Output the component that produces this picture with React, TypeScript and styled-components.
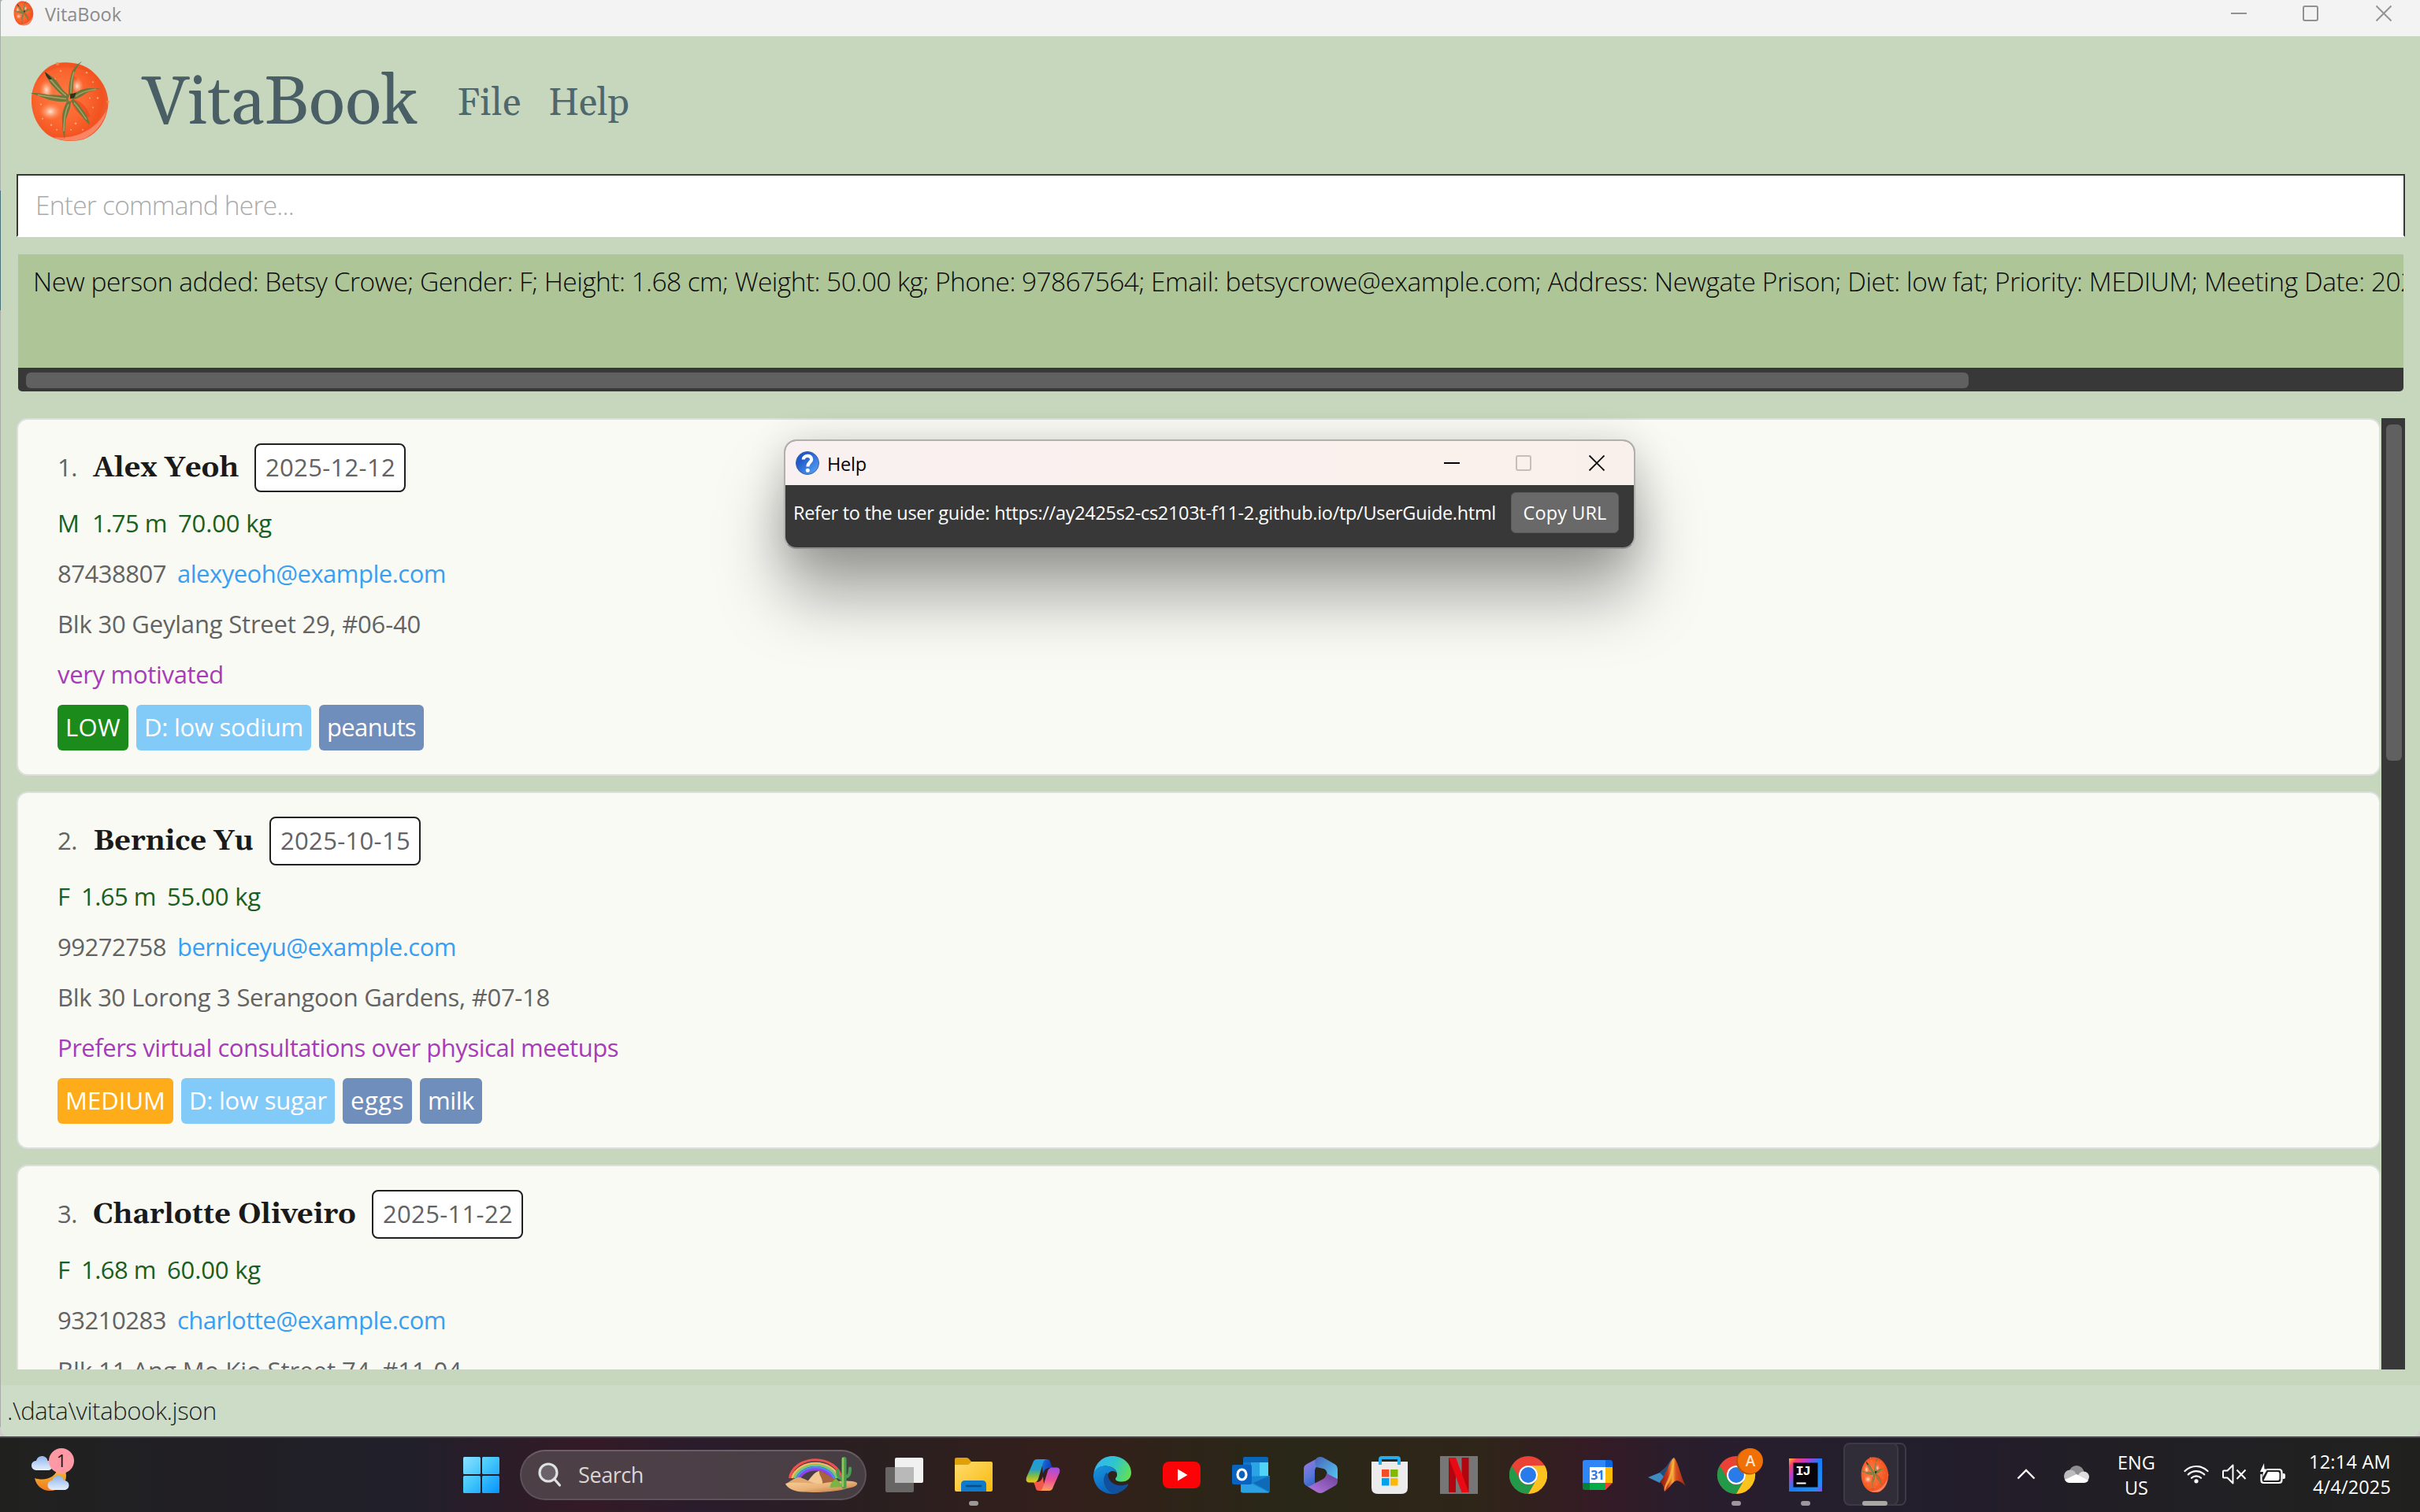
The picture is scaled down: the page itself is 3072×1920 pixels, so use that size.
import React, { useLayoutEffect, useRef, useState } from "react";
import styled, { createGlobalStyle } from "styled-components";

const GlobalStyle = createGlobalStyle`
  *, *::before, *::after { box-sizing: border-box; }
  html, body { margin: 0; padding: 0; background: #20211f; }
  body { font-family: "Open Sans", "Noto Sans", sans-serif; overflow: hidden; }
  svg { display: block; flex: none; }
`;

/* ---------- text that tracks itself to a given advance width ---------- */

const Tracked = styled.span`
  display: inline-block;
  white-space: pre;
`;

function Fit({ w, children }: { w: number; children: string }) {
  const ref = useRef<HTMLSpanElement>(null);
  const [spacing, setSpacing] = useState(0);
  useLayoutEffect(() => {
    const natural = ref.current!.getBoundingClientRect().width;
    setSpacing((w - natural) / children.length);
  }, [w, children]);
  return (
    <Tracked ref={ref} style={{ letterSpacing: spacing }}>
      {children}
    </Tracked>
  );
}

/* ---------- desktop and main window ---------- */

const Desktop = styled.div`
  position: relative;
  display: flex;
  flex-direction: column;
  width: 3072px;
  height: 1920px;
  overflow: hidden;
`;

const Edge = styled.div`
  display: flex;
  height: 1824px;
  padding-left: 1px;
  background: linear-gradient(#a9b0ab 0 242px, #46727a 242px 394px, #a9a9a9 394px 1812px, #cfcccb 1812px);
`;

const AppWindow = styled.div`
  display: flex;
  flex-direction: column;
  flex: 1;
  min-width: 0;
  background: #c7d7bd;
  border-radius: 4px 0 9px 9px;
  overflow: hidden;
`;

const TitleBar = styled.div`
  display: flex;
  align-items: flex-start;
  height: 46px;
  padding: 1px 35px 0 16px;
  background: #f3f3f3;
`;

const TitleText = styled.div`
  margin: 0 auto 0 14px;
  font-size: 23.5px;
  line-height: 34px;
  color: #8b8b8b;
`;

const Controls = styled.div<{ $gap: number }>`
  display: flex;
  align-items: center;
  gap: ${(p) => p.$gap}px;
`;

const MainControls = styled(Controls)`
  height: 32px;
`;

const Header = styled.header`
  display: flex;
  align-items: center;
  height: 165px;
  margin-bottom: 10px;
  padding: 1px 0 0 37px;
  font-family: Gelasio, Georgia, "Liberation Serif", serif;
`;

const Brand = styled.div`
  margin: 5px 0 0 41px;
  font-size: 86px;
  line-height: 110px;
  color: #4a5e65;
`;

const Menu = styled.nav`
  display: flex;
  gap: 34px;
  margin: 5px 0 0 50px;
  font-size: 48px;
  line-height: 60px;
  color: #4f686c;
`;

const CommandBox = styled.div`
  display: flex;
  align-items: center;
  height: 80px;
  margin: 0 19px 0 20px;
  padding: 0 0 2px 22px;
  border: 2px solid #353a39;
  border-bottom-color: #fff;
  background: #fff;
  font-weight: 300;
  font-size: 33.5px;
  color: #a9abab;
`;

const ResultBox = styled.div`
  display: flex;
  flex-direction: column;
  height: 174px;
  margin: 22px 21px 0 22px;
  background: #aec598;
  border-radius: 0 0 5px 5px;
  overflow: hidden;
`;

const ResultText = styled.div`
  flex: 1;
  padding: 10px 0 0 19px;
  font-weight: 300;
  font-size: 33.5px;
  line-height: 48px;
  color: #0b0b0b;
  white-space: pre;
`;

const HScroll = styled.div`
  height: 30px;
  padding: 6px 10px 4px;
  background: #383838;
`;

const HThumb = styled.div`
  width: 2466px;
  height: 20px;
  border-radius: 6px;
  background: #606060;
`;

const ListArea = styled.div`
  display: flex;
  height: 1208px;
  margin: 34px 19px 0 20px;
  overflow: hidden;
`;

const CardList = styled.div`
  display: flex;
  flex-direction: column;
  gap: 20px;
  flex: 1;
  margin-right: 1px;
`;

const VScroll = styled.div`
  width: 30px;
  padding: 8px 4px 0 6px;
  background: #383838;
`;

const VThumb = styled.div`
  width: 20px;
  height: 427px;
  border-radius: 6px;
  background: #606060;
`;

const StatusBar = styled.footer`
  display: flex;
  align-items: center;
  height: 65px;
  margin-top: 20px;
  padding: 0 0 1px 8px;
  background: #cddcc7;
  font-weight: 300;
  font-size: 31px;
  color: #1d1f1d;
`;

/* ---------- person cards ---------- */

const Card = styled.article`
  flex: none;
  height: 454px;
  padding: 30px 50px;
  border: 2px solid #dddfdf;
  border-radius: 14px;
  background: #f9faf4;
  font-size: 31px;
  color: #636363;
`;

const CardHead = styled.div`
  display: flex;
  height: 62px;
  line-height: 60px;
  margin-bottom: 6.5px;
`;

const Index = styled.span`
  width: 45px;
`;

const Name = styled.span`
  font-family: Gelasio, Georgia, "Liberation Serif", serif;
  font-weight: 700;
  font-size: 36px;
  line-height: 63px;
  color: #1a1a1a;
`;

const DateBox = styled.span`
  width: 192px;
  margin-left: 20px;
  padding-left: 12px;
  line-height: 57px;
  border: 2px solid #202020;
  border-radius: 8px;
  background: #fff;
`;

const Line = styled.div<{ $color?: string; $gap?: number }>`
  display: flex;
  gap: ${(p) => p.$gap ?? 14}px;
  height: 64px;
  line-height: 64px;
  color: ${(p) => p.$color ?? "#636363"};
`;

const Tags = styled.div`
  display: flex;
  gap: 10px;
  margin-top: 7.5px;
`;

const Tag = styled.span<{ $bg: string }>`
  height: 58px;
  padding: 0 10px;
  line-height: 57px;
  border-radius: 6px;
  background: ${(p) => p.$bg};
  color: #fff;
`;

/* ---------- help dialog ---------- */

const Dialog = styled.div`
  position: absolute;
  left: 995px;
  top: 558px;
  width: 1081px;
  height: 139px;
  border: 2px solid #b1b0ae;
  border-bottom-color: #8d8d8b;
  border-radius: 16px;
  background: #383838;
  box-shadow: 0 60px 84px rgba(0, 0, 0, 0.34), 0 6px 50px rgba(0, 0, 0, 0.16);
  overflow: hidden;
`;

const DialogTitle = styled.div`
  display: flex;
  align-items: center;
  height: 56px;
  padding: 0 36px 0 13px;
  background: linear-gradient(90deg, #f9f0f1, #faf0ec 80%, #faf0eb);
  font-size: 23.5px;
  color: #000;
`;

const DialogLabel = styled.span`
  margin: 1px auto 0 10px;
`;

const DialogBody = styled.div`
  display: flex;
  align-items: flex-start;
  gap: 19px;
  padding: 9px 0 0 10px;
  font-size: 23.5px;
  line-height: 53px;
  color: #fff;
`;

const CopyButton = styled.button`
  width: 137px;
  height: 52px;
  padding: 0;
  border: 1px solid #5a5a5a;
  border-radius: 6px;
  background: #696969;
  font: 23.5px "Open Sans", sans-serif;
  color: #fff;
`;

/* ---------- taskbar ---------- */

const Taskbar = styled.div`
  display: flex;
  align-items: center;
  height: 96px;
  border-top: 2px solid #48464a;
  padding-right: 37px;
  background: linear-gradient(90deg, #20211f 0, #211f24 240px, #211f2a 520px, #341a26 750px, #2a1c2c 885px,
    #2a1f20 1110px, #341f1c 1350px, #2e2418 1500px, #292718 1640px, #2f2519 1880px, #351b25 2020px, #2a1d2c 2130px,
    #221f2c 2400px, #231d2b 2500px, #211f25 2680px, #20211f 3072px);
`;

const WeatherSlot = styled.div`
  width: 567px;
  padding: 0 0 12px 38px;
`;

const Cell = styled.div`
  position: relative;
  display: flex;
  align-items: center;
  justify-content: center;
  width: 88px;
  height: 92px;
`;

const Indicator = styled.i<{ $wide?: boolean }>`
  position: absolute;
  bottom: 7px;
  left: ${(p) => (p.$wide ? 28 : 38)}px;
  width: ${(p) => (p.$wide ? 32 : 12)}px;
  height: 6px;
  border-radius: 3px;
  background: ${(p) => (p.$wide ? "#a9a7a3" : "#9b979b")};
`;

const ActiveTile = styled.div`
  position: absolute;
  left: 4px;
  top: 5px;
  width: 70px;
  height: 80px;
  border: 2px solid #3d3a45;
  border-radius: 8px;
  background: #312d38;
`;

const BackTile = styled(ActiveTile)`
  left: 14px;
  background: #26232e;
`;

const Layer = styled.div`
  position: relative;
`;

const SearchPill = styled.div`
  display: flex;
  align-items: center;
  width: 440px;
  height: 64px;
  margin: 0 4px 0 5px;
  padding: 0 9px 0 21px;
  border: 2px solid #5d5259;
  border-top-color: #6b5f66;
  border-radius: 32px;
  background: linear-gradient(90deg, #4c3f45, #4d3f47 40%, #463e43);
  font-size: 27px;
  color: #dad6d8;
`;

const SearchLabel = styled.span`
  margin: -1px auto 0 21px;
`;

const Tray = styled.div`
  display: flex;
  align-items: center;
  margin-left: auto;
  height: 94px;
  font-size: 23.5px;
  line-height: 32px;
  color: #fff;
`;

const Lang = styled.div`
  width: 50px;
  margin: 0 35px;
  text-align: center;
`;

const Clock = styled.div`
  width: 106px;
  margin: -2px 0 0 28px;
  text-align: right;
`;

const TrayIcons = styled.div<{ $gap: number }>`
  display: flex;
  align-items: center;
  gap: ${(p) => p.$gap}px;
  padding-bottom: 2px;
`;

/* ---------- drawings ---------- */

function Tomato({ w, h, id }: { w: number; h: number; id: string }) {
  return (
    <svg width={w} height={h} viewBox="8 8 102 102" preserveAspectRatio="none">
      <defs>
        <radialGradient id={id} cx="0.4" cy="0.45" r="0.62">
          <stop offset="0" stopColor="#ff7a42" />
          <stop offset="0.5" stopColor="#fb6730" />
          <stop offset="0.85" stopColor="#f2521f" />
          <stop offset="1" stopColor="#e86238" />
        </radialGradient>
        <radialGradient id={id + "g"}>
          <stop offset="0" stopColor="#ffe6d6" />
          <stop offset="1" stopColor="#ff9a66" stopOpacity="0" />
        </radialGradient>
      </defs>
      <path
        d="M44 10C58 8 76 10 89 22C103 35 109 50 107 66C104 86 92 100 76 106C60 110 40 108 28 98C15 87 9 70 10 54C11 36 22 16 44 10Z"
        fill={`url(#${id})`}
      />
      <path d="M44 10C60 9 76 12 88 23C80 20 62 13 44 16C32 18 22 26 17 34C21 21 32 12 44 10Z" fill="#ee4c22" opacity="0.45" />
      <path d="M106 68C102 86 90 99 77 105C62 109 48 108 38 103C62 107 92 96 106 68Z" fill="#ff9478" opacity="0.75" />
      <path d="M60 56C68 54 82 64 84 78C72 78 62 68 60 56Z" fill="#e23a14" opacity="0.45" />
      <path d="M63 26C70 28 73 42 67 48L62 46Z" fill="#e03e18" opacity="0.4" />
      <ellipse cx="29" cy="44" rx="9" ry="13" fill={`url(#${id}g)`} />
      <ellipse cx="34" cy="71" rx="14" ry="11" fill={`url(#${id}g)`} />
      <ellipse cx="68" cy="39" rx="8" ry="11" fill={`url(#${id}g)`} />
      <g fill="#ffb98a" opacity="0.8">
        <circle cx="35" cy="88" r="1.2" /><circle cx="42" cy="94" r="1" /><circle cx="24" cy="80" r="1" />
        <circle cx="66" cy="86" r="1.3" /><circle cx="76" cy="78" r="1" /><circle cx="80" cy="22" r="1.2" />
        <circle cx="88" cy="34" r="1" /><circle cx="94" cy="54" r="1.2" /><circle cx="47" cy="20" r="1.2" />
        <circle cx="40" cy="30" r="1" /><circle cx="75" cy="94" r="1" /><circle cx="22" cy="62" r="1.1" />
        <circle cx="60" cy="94" r="1" /><circle cx="88" cy="66" r="1" /><circle cx="84" cy="54" r="1" />
        <circle cx="43" cy="11" r="2.2" fill="#f78c3c" /><circle cx="107" cy="59" r="1.8" fill="#f78c3c" />
      </g>
      <g fill="#6f773a">
        <path d="M57 54C50 53 43 46 38 40C32 34 29 27 27 21C33 25 40 29 43 34C48 41 51 47 58 50Z" />
        <path d="M57 50C57 38 59 28 62 20C65 14 70 10 74 8C68 14 64 21 63 30C63 40 62 46 62 51Z" />
        <path d="M62 52C66 46 73 43 80 42C86 41 92 42 98 42C91 44 84 45 79 48C74 52 68 55 62 56Z" />
        <path d="M56 52C48 50 40 50 32 50C24 49 15 47 9 48C18 50 26 55 36 57C44 59 50 59 57 58Z" />
        <path d="M55 58C51 66 48 74 49 84C49 92 50 100 52 106C53 98 52 88 54 80C57 72 60 66 60 58Z" />
        <path d="M60 58C66 65 69 72 74 77C77 81 81 85 84 88C83 80 79 74 75 69C71 63 68 58 62 55Z" />
      </g>
      <g fill="none" stroke="#b0ae72" strokeWidth="1.5" opacity="0.85">
        <path d="M31 28C38 34 44 44 54 51" /><path d="M60 48C60 38 61 28 64 21" /><path d="M66 52C74 46 84 44 92 43" />
        <path d="M18 50C30 52 42 54 54 55" /><path d="M57 62C52 72 51 84 51 96" /><path d="M64 60C70 66 74 73 80 81" />
      </g>
      <path d="M59 49L67 47L64 54L59 55Z" fill="#30351a" />
      <path d="M27 21C31 24 34 27 36 30L33 31C29 28 28 25 27 21Z" fill="#34341c" />
    </svg>
  );
}

const WinControl = ({ kind, color }: { kind: "min" | "max" | "close"; color: string }) => (
  <svg width="22" height="22" viewBox="0 0 22 22" fill="none" stroke={color} strokeWidth="2">
    {kind === "min" && <path d="M1 11H21" />}
    {kind === "max" && <rect x="1" y="2" width="18" height="18" rx="2" />}
    {kind === "close" && <path d="M1.5 1.5L20.5 20.5M20.5 1.5L1.5 20.5" strokeWidth="1.8" />}
  </svg>
);

const HelpIcon = () => (
  <svg width="30" height="30" viewBox="0 0 30 30">
    <defs>
      <linearGradient id="helpBall" x1="0" y1="0" x2="1" y2="1">
        <stop offset="0.3" stopColor="#2259cb" />
        <stop offset="1" stopColor="#5cadf5" />
      </linearGradient>
    </defs>
    <circle cx="15" cy="15" r="14.5" fill="url(#helpBall)" stroke="#3b62a8" />
    <path d="M9.800 10.500C10 4.600 20.200 4.400 20.200 10.200C20.200 14.200 15.400 14 15.400 19.500" fill="none" stroke="#fff" strokeWidth="4.200" />
    <circle cx="15.300" cy="24.200" r="2.500" fill="#fff" />
  </svg>
);

const CLOUD = "M7 18C2.5 18 0 15.5 0 12C0 8.5 2.5 6 6 6C7 2 10 0 13.5 0C17 0 20 2.5 20.5 6C24.5 6 27 8.5 27 12C27 15.5 24.5 18 21 18Z";

const Weather = () => (
  <svg width="60" height="60" viewBox="38 1836 60 60">
    <defs>
      <linearGradient id="cloud" x1="0" y1="0" x2="0" y2="1">
        <stop offset="0" stopColor="#8fb4ee" />
        <stop offset="1" stopColor="#e6effc" />
      </linearGradient>
      <linearGradient id="moon" x1="0" y1="0" x2="0" y2="1">
        <stop offset="0" stopColor="#f7c531" />
        <stop offset="1" stopColor="#ee7a20" />
      </linearGradient>
    </defs>
    <path d="M73 1862C72 1876 56 1880 44 1876C46 1886 54 1892 63 1892C76 1892 84 1884 84 1873C84 1868 82 1864 79 1861Z" fill="url(#moon)" />
    <path d={CLOUD} transform="translate(40 1848)" fill="url(#cloud)" />
    <path d={CLOUD} transform="translate(60.5 1873)" fill="url(#cloud)" />
    <circle cx="78" cy="1854" r="16" fill="#ff99a4" />
    <text x="78" y="1861.5" fontSize="22" textAnchor="middle" fill="#1d1214">1</text>
  </svg>
);

const StartIcon = () => (
  <svg width="46" height="46" viewBox="0 0 46 46">
    <defs>
      <linearGradient id="start" gradientUnits="userSpaceOnUse" x1="0" y1="0" x2="46" y2="46">
        <stop offset="0" stopColor="#8fe1ff" />
        <stop offset="0.45" stopColor="#45c8fb" />
        <stop offset="1" stopColor="#0593fd" />
      </linearGradient>
    </defs>
    <g fill="url(#start)">
      <rect width="22" height="22" rx="1.5" /><rect x="24" width="22" height="22" rx="1.5" />
      <rect y="24" width="22" height="22" rx="1.5" /><rect x="24" y="24" width="22" height="22" rx="1.5" />
    </g>
  </svg>
);

const Magnifier = () => (
  <svg width="30" height="32" viewBox="0 0 30 32" fill="none" stroke="#dfe1e3" strokeWidth="3.2" strokeLinecap="round">
    <circle cx="13" cy="13" r="11" fill="#6b6168" />
    <path d="M20.5 21L27.5 29" />
  </svg>
);

const Rainbow = () => (
  <svg width="92" height="48" viewBox="0 0 92 48">
    <defs>
      <linearGradient id="dune" x1="0" y1="0" x2="1" y2="1">
        <stop offset="0" stopColor="#f7cf9a" />
        <stop offset="0.5" stopColor="#eab277" />
        <stop offset="1" stopColor="#b8713f" />
      </linearGradient>
      <linearGradient id="cactus" x1="0" y1="0" x2="1" y2="0">
        <stop offset="0" stopColor="#8fc34f" />
        <stop offset="1" stopColor="#2f8a54" />
      </linearGradient>
    </defs>
    <g fill="none" strokeWidth="3.2">
      <path d="M5.500 28A33 26.500 0 0 1 71 28" stroke="#f0504f" />
      <path d="M8.500 28A30.500 24 0 0 1 68 28" stroke="#f6b65d" />
      <path d="M11.500 28A27.500 21.500 0 0 1 65 28" stroke="#79c878" />
      <path d="M14.500 29A24.500 19 0 0 1 62 29" stroke="#4b8df0" />
      <path d="M17.500 29A21.500 16.500 0 0 1 59 29" stroke="#9142f0" />
    </g>
    <path d="M28 34C32 30 38 20 43 19C50 19 62 32 76 35L70 40H28Z" fill="#a8643c" />
    <path d="M26 34C32 29 36 20 43 19C42 25 50 30 46 38Z" fill="#f3c894" />
    <path d="M1 35C8 31 12 27 18 27C24 28 30 33 40 35L20 38Z" fill="#e2a871" />
    <path d="M0 35C10 32 30 35 44 35C60 33 82 29 91 34C92 38 86 40 78 41C66 46 30 47 16 45C6 43 1 38 0 35Z" fill="url(#dune)" />
    <path d="M57 40C56 35 60 33 64 28C68 33 72 34 72 39Z" fill="#7cb342" />
    <g fill="none" stroke="#4a9c52" strokeLinecap="round">
      <path d="M74.500 38.500V4" strokeWidth="6" />
      <path d="M74.500 29C69 30 66 26 66 18" strokeWidth="4" />
      <path d="M75 26C81 27 82 22 82 15.500" strokeWidth="4" />
    </g>
    <path d="M73 3V38" stroke="#94c855" strokeWidth="2.500" strokeLinecap="round" />
  </svg>
);

const TaskView = () => (
  <svg width="48" height="44" viewBox="0 0 48 44">
    <rect x="12" width="36" height="32" rx="2" fill="#f1f1f1" />
    <rect y="12" width="36" height="32" rx="2" fill="#686665" />
    <rect x="12" y="12" width="24" height="20" fill="#b9b9b9" />
  </svg>
);

const Folder = () => (
  <svg width="48" height="44" viewBox="0 0 48 44">
    <defs>
      <linearGradient id="folder" x1="0" y1="0" x2="1" y2="1">
        <stop offset="0" stopColor="#ffdc70" />
        <stop offset="1" stopColor="#f9b90d" />
      </linearGradient>
    </defs>
    <path d="M0 2Q0 0 2 0H15Q17 0 18.500 2L21 5H46V14H0Z" fill="#dfa008" />
    <path d="M0 9H16Q18 9 19.500 7L21 5H46Q48 5 48 7V41Q48 43 46 43H2Q0 43 0 41Z" fill="url(#folder)" />
    <path d="M8 43V34Q8 29 13 29H35Q40 29 40 34V43Z" fill="#0f7ac9" />
    <path d="M15 36H33" stroke="#0a4f8c" strokeWidth="2.4" strokeLinecap="round" />
  </svg>
);

const Copilot = () => (
  <svg width="44" height="42" viewBox="0 0 44 42">
    <defs>
      <linearGradient id="copA" x1="0" y1="0" x2="0" y2="1">
        <stop offset="0" stopColor="#1b9be8" /><stop offset="0.45" stopColor="#2b9fbf" />
        <stop offset="0.7" stopColor="#7cbb4a" /><stop offset="1" stopColor="#f3c90f" />
      </linearGradient>
      <linearGradient id="copB" x1="0.3" y1="0" x2="0.2" y2="1">
        <stop offset="0" stopColor="#a64ee0" /><stop offset="0.5" stopColor="#ec4f96" /><stop offset="1" stopColor="#ffa25a" />
      </linearGradient>
      <linearGradient id="copC" x1="0" y1="0" x2="1" y2="0.4">
        <stop offset="0" stopColor="#1677dd" /><stop offset="1" stopColor="#1537b8" />
      </linearGradient>
    </defs>
    <path d="M20 1H27C31 1 31 4 32 7L34 12H30C26 12 24 14 22 19Z" fill="url(#copC)" />
    <path d="M24 41H17C13 41 13 38 12 35L10 30H14C18 30 20 28 22 23Z" fill="#f4584a" />
    <path d="M9 6C10 2 12 1 15 1H27C24 1 23 3 22 6L16 26C15 29 13 30.500 10 30.500H5C1 30.500 0 28 1 24Z" fill="url(#copA)" />
    <path d="M35 36C34 40 32 41 29 41H17C20 41 21 39 22 36L28 16C29 13 31 11.500 34 11.500H39C43 11.500 44 14 43 18Z" fill="url(#copB)" />
  </svg>
);

const EdgeIcon = () => (
  <svg width="48" height="48" viewBox="0 0 48 48">
    <defs>
      <linearGradient id="edgeTop" x1="0" y1="0.3" x2="1" y2="0.6">
        <stop offset="0" stopColor="#35b5f2" /><stop offset="0.5" stopColor="#2fc5cf" /><stop offset="1" stopColor="#63e052" />
      </linearGradient>
      <linearGradient id="edgeLow" x1="0" y1="0" x2="0.4" y2="1">
        <stop offset="0" stopColor="#1795e0" /><stop offset="1" stopColor="#0c63b8" />
      </linearGradient>
    </defs>
    <path d="M0.500 22C2 9 12 0 24 0C38 0 48 10 48 21C48 28 43 32.500 36 32.500C31 32.500 28 31 28 29C28 27.500 30 27 30 23.500C30 16 22 12.500 15 12.500C8 12.500 3 16 0.500 22Z" fill="url(#edgeTop)" />
    <path d="M0 24C1 16 8 12.500 15 12.500C23 12.500 29 17 30 22C27 17 19 18 17 26C14 38 24 47 33 46C29 48 26 48 24 48C10 48 0 37 0 24Z" fill="url(#edgeLow)" />
    <path d="M17 21C11 26 11 40 24 47.500C34 48 42 41 44 37C44.500 35.500 43.500 35 42.500 35.700C32 40 19 35 18.500 24Z" fill="#10509c" />
  </svg>
);

const YouTube = () => (
  <svg width="48" height="34" viewBox="0 0 48 34">
    <rect width="48" height="34" rx="8" fill="#fb0307" />
    <path d="M19 9.500L31.500 17L19 24.500Z" fill="#fff" />
  </svg>
);

const Outlook = () => (
  <svg width="48" height="46" viewBox="0 0 48 46">
    <path d="M14 2Q14 0 16 0H44Q46 0 46 2V26H14Z" fill="#0a66b7" />
    <rect x="14" y="7" width="10" height="10" fill="#1277c7" />
    <rect x="24" y="7" width="11" height="18" fill="#2aa5e4" />
    <rect x="35" y="7" width="11" height="18" fill="#4fd4f7" />
    <path d="M11 25L48 24V43Q48 45.500 45 45.500H14Q11 45.500 11 43Z" fill="#1687d3" />
    <path d="M48 24V43Q48 44 47.500 44.500L27 33Z" fill="#0f6bb8" />
    <path d="M11 27L47 45Q46 45.500 45 45.500H14Q11 45.500 11 43Z" fill="#2ba0e2" />
    <rect y="10" width="25" height="25" rx="2" fill="#0a63c0" />
    <ellipse cx="12.500" cy="22.500" rx="5.500" ry="6.500" fill="none" stroke="#fff" strokeWidth="3.2" />
  </svg>
);

const M365 = () => (
  <svg width="44" height="46" viewBox="0 0 44 46">
    <defs>
      <linearGradient id="m1" x1="0" y1="0" x2="0.5" y2="1">
        <stop offset="0" stopColor="#a478e0" /><stop offset="0.6" stopColor="#5b78dc" /><stop offset="1" stopColor="#2a62c0" />
      </linearGradient>
      <linearGradient id="m2" x1="0" y1="0" x2="1" y2="1">
        <stop offset="0" stopColor="#4c63b8" /><stop offset="1" stopColor="#52cbf5" />
      </linearGradient>
      <linearGradient id="m3" x1="0" y1="1" x2="1" y2="0">
        <stop offset="0" stopColor="#b77be6" /><stop offset="1" stopColor="#6a3f93" />
      </linearGradient>
    </defs>
    <path d="M22 0L5 9Q1 11 1 15V31Q1 35 5 37L12 39Q16 36 15 30V17Q15 14 18 12L26 8Z" fill="url(#m1)" />
    <path d="M18 1Q22 -1 26 1L40 9Q44 11 44 16V30L31 22Q30 16 26 15L17 13Q13 5 18 1Z" fill="url(#m2)" />
    <path d="M44 28V31Q44 35 40 37L26 45Q22 47 18 45L5 37Q10 38 14 34L24 29Q29 27 30 21Z" fill="url(#m3)" />
  </svg>
);

const Store = () => (
  <svg width="46" height="48" viewBox="0 0 46 48">
    <path d="M0 7H46V40Q46 48 38 48H8Q0 48 0 40Z" fill="#ececec" />
    <path d="M11 11V4Q11 2 13 2H33Q35 2 35 4V11" fill="none" stroke="#22aef0" strokeWidth="4" />
    <rect x="13" y="17" width="9.500" height="9.500" fill="#f04e26" /><rect x="24" y="17" width="9.500" height="9.500" fill="#80b900" />
    <rect x="13" y="28" width="9.500" height="9.500" fill="#00a3ee" /><rect x="24" y="28" width="9.500" height="9.500" fill="#feb800" />
  </svg>
);

const Netflix = () => (
  <svg width="48" height="48" viewBox="0 0 48 48">
    <rect width="48" height="48" fill="#767676" />
    <rect x="11" y="2" width="9" height="44" fill="#b1060f" />
    <rect x="27.500" y="2" width="9" height="44" fill="#b1060f" />
    <rect x="11" y="2" width="9" height="44" fill="#e90a14" transform="translate(-0.700 0) skewX(20.500)" />
  </svg>
);

const ChromeBall = () => (
  <g>
    <circle cx="24" cy="24" r="24" fill="#ea4335" />
    <path d="M3.200 12A24 24 0 0 0 24 48L34.400 30A12 12 0 0 1 13.600 30Z" fill="#229a49" />
    <path d="M24 48A24 24 0 0 0 44.800 12H24A12 12 0 0 1 34.400 30Z" fill="#fcc31e" />
    <circle cx="24" cy="24" r="12" fill="#fff" />
    <circle cx="24" cy="24" r="10" fill="#2a7bea" />
  </g>
);

const Chrome = () => (
  <svg width="48" height="48" viewBox="0 0 48 48">
    <ChromeBall />
  </svg>
);

const ChromeProfile = () => (
  <svg width="60" height="60" viewBox="-6 -6 60 60" overflow="visible">
    <ChromeBall />
    <circle cx="40.500" cy="7" r="16.500" fill="#b85606" />
    <circle cx="42" cy="6" r="16" fill="#f07006" />
    <text x="42" y="13" fontSize="19" fontWeight="600" textAnchor="middle" fill="#fbe3cd">A</text>
  </svg>
);

const Calendar = () => (
  <svg width="38" height="38" viewBox="0 0 38 38">
    <path d="M0 3Q0 0 3 0H29V9H9V29H0Z" fill="#2f86f6" />
    <path d="M29 0H35Q38 0 38 3V9H29Z" fill="#0b66dc" />
    <path d="M29 9H38V29H29Z" fill="#fdbb06" />
    <path d="M9 29H29V38H9Z" fill="#04ac47" />
    <path d="M0 29H9V38H3Q0 38 0 35Z" fill="#088038" />
    <path d="M29 29H38L29 38Z" fill="#ea4235" />
    <rect x="9" y="9" width="20" height="20" fill="#fff" />
    <text x="18.500" y="25" fontSize="16" fontWeight="700" textAnchor="middle" fill="#2a7bea" letterSpacing="-1">31</text>
  </svg>
);

const Matlab = () => (
  <svg width="48" height="44" viewBox="0 0 48 44">
    <defs>
      <linearGradient id="ml" x1="0" y1="0" x2="1" y2="0">
        <stop offset="0" stopColor="#7a1f15" /><stop offset="0.3" stopColor="#c8361c" /><stop offset="0.5" stopColor="#f5a93a" />
        <stop offset="0.62" stopColor="#d8501f" /><stop offset="1" stopColor="#9c2313" />
      </linearGradient>
    </defs>
    <path d="M0 25L15 19L24 11C27 6 30 1 33 0C30 8 24 22 15 32Z" fill="#3d8cc4" />
    <path d="M15 19L24 11C27 6 30 1 33 0L20 24Z" fill="#1e4f7c" />
    <path d="M15 31C22 24 27 4 33 0C38 4 42 26 48 36C42 31 38 28 34 30C29 34 26 40 21 43C20 38 19 33 15 31Z" fill="url(#ml)" />
    <path d="M33 0C34 10 32 24 24 36L21 43C20 38 22 34 25 28C29 20 31 8 33 0Z" fill="#f7b541" opacity="0.85" />
  </svg>
);

const IntelliJ = () => (
  <svg width="42" height="42" viewBox="0 0 42 42">
    <defs>
      <linearGradient id="ij" x1="0" y1="0" x2="1" y2="1">
        <stop offset="0" stopColor="#f5c02c" /><stop offset="0.13" stopColor="#fb3f6c" /><stop offset="0.3" stopColor="#b83bd0" />
        <stop offset="0.5" stopColor="#167df5" /><stop offset="0.85" stopColor="#1f8df3" /><stop offset="1" stopColor="#8b4bf0" />
      </linearGradient>
    </defs>
    <rect width="42" height="42" fill="url(#ij)" />
    <rect x="5.500" y="5.500" width="31" height="31" fill="#09040c" />
    <text x="8.500" y="21" fontFamily="Liberation Mono" fontWeight="700" fontSize="17" letterSpacing="-1.2" fill="#fff">IJ</text>
    <rect x="9.500" y="30.500" width="12" height="2" fill="#fff" />
  </svg>
);

const Chevron = () => (
  <svg width="24" height="14" viewBox="0 0 24 14" fill="none" stroke="#fff" strokeWidth="2.4">
    <path d="M1.500 12.500L12 2L22.500 12.500" />
  </svg>
);

const OneDrive = () => (
  <svg width="32" height="22" viewBox="0 0 32 22">
    <circle cx="16" cy="9.500" r="9.500" fill="#8e8d90" />
    <circle cx="8" cy="13.500" r="8" fill="#bcbcbd" />
    <circle cx="25" cy="14.500" r="7" fill="#dedede" />
    <path d="M16 11L31 19Q29 22 25 22H7Q3 22 1 18Z" fill="#fff" />
  </svg>
);

const Wifi = () => (
  <svg width="32" height="24" viewBox="0 0 32 24" fill="none" stroke="#fff" strokeWidth="2.200" strokeLinecap="round">
    <path d="M1.500 8A20.500 20.500 0 0 1 30.500 8" />
    <path d="M5.800 12.400A14.500 14.500 0 0 1 26.200 12.400" />
    <path d="M10 16.800A8.500 8.500 0 0 1 22 16.800" />
    <circle cx="16" cy="20.800" r="2.600" fill="#fff" stroke="none" />
  </svg>
);

const Muted = () => (
  <svg width="31" height="26" viewBox="0 0 31 26" fill="none" stroke="#fff" strokeWidth="2">
    <path d="M1 9.500Q1 8.500 2 8.500H6.500L13.500 1.500V24.500L6.500 17.500H2Q1 17.500 1 16.500Z" strokeLinejoin="round" />
    <path d="M18.500 7.500L29.500 19M29.500 7.500L18.500 19" />
  </svg>
);

const Battery = () => (
  <svg width="32" height="28" viewBox="0 0 32 28">
    <path d="M9 8H24Q27.500 8 27.500 11.500V21.500Q27.500 25 24 25H4.500Q1.500 25 1.500 21.500V14" fill="none" stroke="#fff" strokeWidth="2.200" />
    <path d="M10 11H22Q24.500 11 24.500 13V20Q24.500 22 22 22H4.500Z" fill="#fff" />
    <path d="M28.500 13H30Q32 13 32 15V18Q32 20 30 20H28.500Z" fill="#fff" />
    <path d="M5 0L0 11H4L3 18L9.500 7.500H5.500Z" fill="#fff" />
  </svg>
);

/* ---------- data ---------- */

type Piece = [string, number];
interface Person {
  index: Piece;
  name: Piece;
  date: string;
  stats: Piece[];
  phone: string;
  email: Piece;
  address: Piece;
  note?: Piece;
  tags: [string, number, string][];
}

const SKY = "#82cbf9";
const SLATE = "#708ebc";

const people: Person[] = [
  {
    index: ["1.", 25],
    name: ["Alex Yeoh", 185],
    date: "2025-12-12",
    stats: [["M", 30], ["1.75 m", 95], ["70.00 kg", 119]],
    phone: "87438807",
    email: ["alexyeoh@example.com", 341],
    address: ["Blk 30 Geylang Street 29, #06-40", 461],
    note: ["very motivated", 211],
    tags: [["LOW", 70, "#1b8b1b"], ["D: low sodium", 202, SKY], ["peanuts", 113, SLATE]],
  },
  {
    index: ["2.", 25],
    name: ["Bernice Yu", 204],
    date: "2025-10-15",
    stats: [["F", 16], ["1.65 m", 95], ["55.00 kg", 119]],
    phone: "99272758",
    email: ["berniceyu@example.com", 354],
    address: ["Blk 30 Lorong 3 Serangoon Gardens, #07-18", 625],
    note: ["Prefers virtual consultations over physical meetups", 712],
    tags: [["MEDIUM", 127, "#ffac1a"], ["D: low sugar", 175, SKY], ["eggs", 68, SLATE], ["milk", 59, SLATE]],
  },
  {
    index: ["3.", 25],
    name: ["Charlotte Oliveiro", 334],
    date: "2025-11-22",
    stats: [["F", 16], ["1.68 m", 95], ["60.00 kg", 119]],
    phone: "93210283",
    email: ["charlotte@example.com", 341],
    address: ["Blk 11 Ang Mo Kio Street 74, #11-04", 513],
    tags: [],
  },
];

const PersonCard = ({ p }: { p: Person }) => (
  <Card>
    <CardHead>
      <Index><Fit w={p.index[1]}>{p.index[0]}</Fit></Index>
      <Name><Fit w={p.name[1]}>{p.name[0]}</Fit></Name>
      <DateBox><Fit w={165}>{p.date}</Fit></DateBox>
    </CardHead>
    <Line $color="#1a5f20">
      {p.stats.map(([t, w]) => <Fit key={t} w={w}>{t}</Fit>)}
    </Line>
    <Line>
      <Fit w={138}>{p.phone}</Fit>
      <Line $color="#389ff2"><Fit w={p.email[1]}>{p.email[0]}</Fit></Line>
    </Line>
    <Line><Fit w={p.address[1]}>{p.address[0]}</Fit></Line>
    {p.note && <Line $color="#a63cb8"><Fit w={p.note[1]}>{p.note[0]}</Fit></Line>}
    <Tags>
      {p.tags.map(([t, w, bg]) => <Tag key={t} $bg={bg}><Fit w={w}>{t}</Fit></Tag>)}
    </Tags>
  </Card>
);

const RESULT: Piece[] = [
  ["New person added: Betsy Crowe; ", 491],
  ["Gender: F; Height: 1.68 cm; Weight: 50.00 kg; Phone: 97867564; ", 928],
  ["Email: betsycrowe@example.com; Address: Newgate Prison; Diet: low fat; ", 1071],
  ["Priority: MEDIUM; ", 266],
  ["Meeting Date: ", 212],
  ["2025-", 84],
];

/* ---------- page ---------- */

export default function App() {
  return (
    <Desktop>
      <GlobalStyle />
      <Edge>
        <AppWindow>
          <TitleBar>
            <Tomato w={26} h={32} id="tomS" />
            <TitleText><Fit w={97}>VitaBook</Fit></TitleText>
            <MainControls $gap={70}>
              <WinControl kind="min" color="#919191" />
              <WinControl kind="max" color="#919191" />
              <WinControl kind="close" color="#919191" />
            </MainControls>
          </TitleBar>
          <Header>
            <Tomato w={102} h={103} id="tomL" />
            <Brand><Fit w={349}>VitaBook</Fit></Brand>
            <Menu>
              <Fit w={82}>File</Fit>
              <Fit w={103}>Help</Fit>
            </Menu>
          </Header>
          <CommandBox><Fit w={328}>Enter command here...</Fit></CommandBox>
          <ResultBox>
            <ResultText>
              {RESULT.map(([t, w]) => <Fit key={t} w={w}>{t}</Fit>)}
            </ResultText>
            <HScroll><HThumb /></HScroll>
          </ResultBox>
          <ListArea>
            <CardList>
              {people.map((p) => <PersonCard key={p.date} p={p} />)}
            </CardList>
            <VScroll><VThumb /></VScroll>
          </ListArea>
          <StatusBar><Fit w={266}>{".\\data\\vitabook.json"}</Fit></StatusBar>
        </AppWindow>
      </Edge>

      <Taskbar>
        <WeatherSlot><Weather /></WeatherSlot>
        <Cell><StartIcon /></Cell>
        <SearchPill>
          <Magnifier />
          <SearchLabel><Fit w={83}>Search</Fit></SearchLabel>
          <Rainbow />
        </SearchPill>
        <Cell><TaskView /></Cell>
        <Cell><Folder /><Indicator /></Cell>
        <Cell><Copilot /></Cell>
        <Cell><EdgeIcon /></Cell>
        <Cell><YouTube /></Cell>
        <Cell><Outlook /></Cell>
        <Cell><M365 /></Cell>
        <Cell><Store /></Cell>
        <Cell><Netflix /></Cell>
        <Cell><Chrome /></Cell>
        <Cell><Calendar /></Cell>
        <Cell><Matlab /></Cell>
        <Cell><ChromeProfile /><Indicator /></Cell>
        <Cell><IntelliJ /><Indicator /></Cell>
        <Cell>
          <BackTile />
          <ActiveTile />
          <Layer><Tomato w={36} h={46} id="tomT" /></Layer>
          <Indicator $wide />
        </Cell>
        <Tray>
          <TrayIcons $gap={36}><Chevron /><OneDrive /></TrayIcons>
          <Lang><Fit w={48}>ENG</Fit><Fit w={30}>US</Fit></Lang>
          <TrayIcons $gap={17}><Wifi /><Muted /><Battery /></TrayIcons>
          <Clock><Fit w={104}>12:14 AM</Fit><Fit w={99}>4/4/2025</Fit></Clock>
        </Tray>
      </Taskbar>

      <Dialog>
        <DialogTitle>
          <HelpIcon />
          <DialogLabel><Fit w={50}>Help</Fit></DialogLabel>
          <Controls $gap={70}>
            <WinControl kind="min" color="#000" />
            <WinControl kind="max" color="#c4bfbd" />
            <WinControl kind="close" color="#111" />
          </Controls>
        </DialogTitle>
        <DialogBody>
          <Fit w={892}>{"Refer to the user guide: https://ay2425s2-cs2103t-f11-2.github.io/tp/UserGuide.html"}</Fit>
          <CopyButton><Fit w={106}>Copy URL</Fit></CopyButton>
        </DialogBody>
      </Dialog>
    </Desktop>
  );
}
